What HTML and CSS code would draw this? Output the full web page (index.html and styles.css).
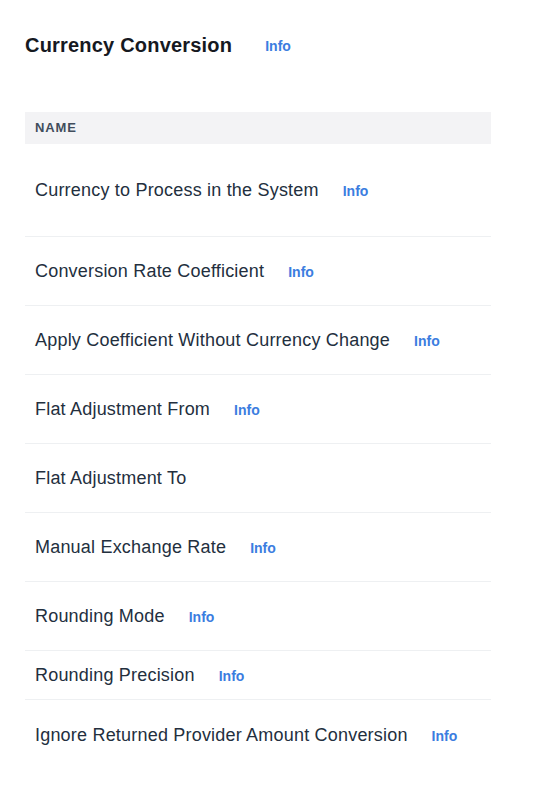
FILE: index.html
```html
<!DOCTYPE html>
<html lang="en">
<head>
    <meta charset="UTF-8">
    <meta name="viewport" content="width=device-width, initial-scale=1.0">
    <title>Currency Conversion</title>
    <link rel="stylesheet" href="styles.css">
</head>
<body>
    <div class="panel">
        <div class="panel-header">
            <h2 class="panel-title">Currency Conversion</h2>
            <a class="info-link" href="#">Info</a>
        </div>

        <div class="table">
            <div class="table-head">NAME</div>

            <div class="table-row row-tall">
                <span class="row-label">Currency to Process in the System</span>
                <a class="info-link" href="#">Info</a>
            </div>
            <div class="table-row">
                <span class="row-label">Conversion Rate Coefficient</span>
                <a class="info-link" href="#">Info</a>
            </div>
            <div class="table-row">
                <span class="row-label">Apply Coefficient Without Currency Change</span>
                <a class="info-link" href="#">Info</a>
            </div>
            <div class="table-row">
                <span class="row-label">Flat Adjustment From</span>
                <a class="info-link" href="#">Info</a>
            </div>
            <div class="table-row">
                <span class="row-label">Flat Adjustment To</span>
            </div>
            <div class="table-row">
                <span class="row-label">Manual Exchange Rate</span>
                <a class="info-link" href="#">Info</a>
            </div>
            <div class="table-row">
                <span class="row-label">Rounding Mode</span>
                <a class="info-link" href="#">Info</a>
            </div>
            <div class="table-row row-short">
                <span class="row-label">Rounding Precision</span>
                <a class="info-link" href="#">Info</a>
            </div>
            <div class="table-row row-last">
                <span class="row-label">Ignore Returned Provider Amount Conversion</span>
                <a class="info-link" href="#">Info</a>
            </div>
        </div>
    </div>
</body>
</html>
```

FILE: styles.css
```css
/* Base */
body {
    margin: 0;
    background-color: #fff;
    color: #16191f;
    font-family: "Liberation Sans", Arial, sans-serif;
}

.panel {
    padding: 32px 64px 0 25px;
}

/* Header */
.panel-header {
    display: flex;
    align-items: center;
    gap: 33px;
    height: 26px;
}

.panel-title {
    margin: 0;
    font-size: 20px;
    font-weight: 700;
    letter-spacing: 0.2px;
    color: #16191f;
}

.info-link {
    color: #3b7de0;
    font-size: 14px;
    font-weight: 700;
    text-decoration: none;
    position: relative;
    top: 1px;
}

/* Table */
.table {
    margin-top: 54px;
    width: 466px;
}

.table-head {
    background-color: #f3f3f5;
    height: 32px;
    line-height: 32px;
    padding-left: 10px;
    font-size: 13px;
    font-weight: 700;
    letter-spacing: 0.9px;
    color: #414d5c;
}

.table-row {
    display: flex;
    align-items: center;
    gap: 24px;
    height: 68px;
    padding-left: 10px;
    border-bottom: 1px solid #eef0f2;
}

.row-tall {
    height: 92px;
}

.row-short {
    height: 48px;
}

.row-last {
    height: 70px;
    border-bottom: none;
}

.row-label {
    font-size: 18px;
    letter-spacing: 0.2px;
    color: #232f3e;
}
```
